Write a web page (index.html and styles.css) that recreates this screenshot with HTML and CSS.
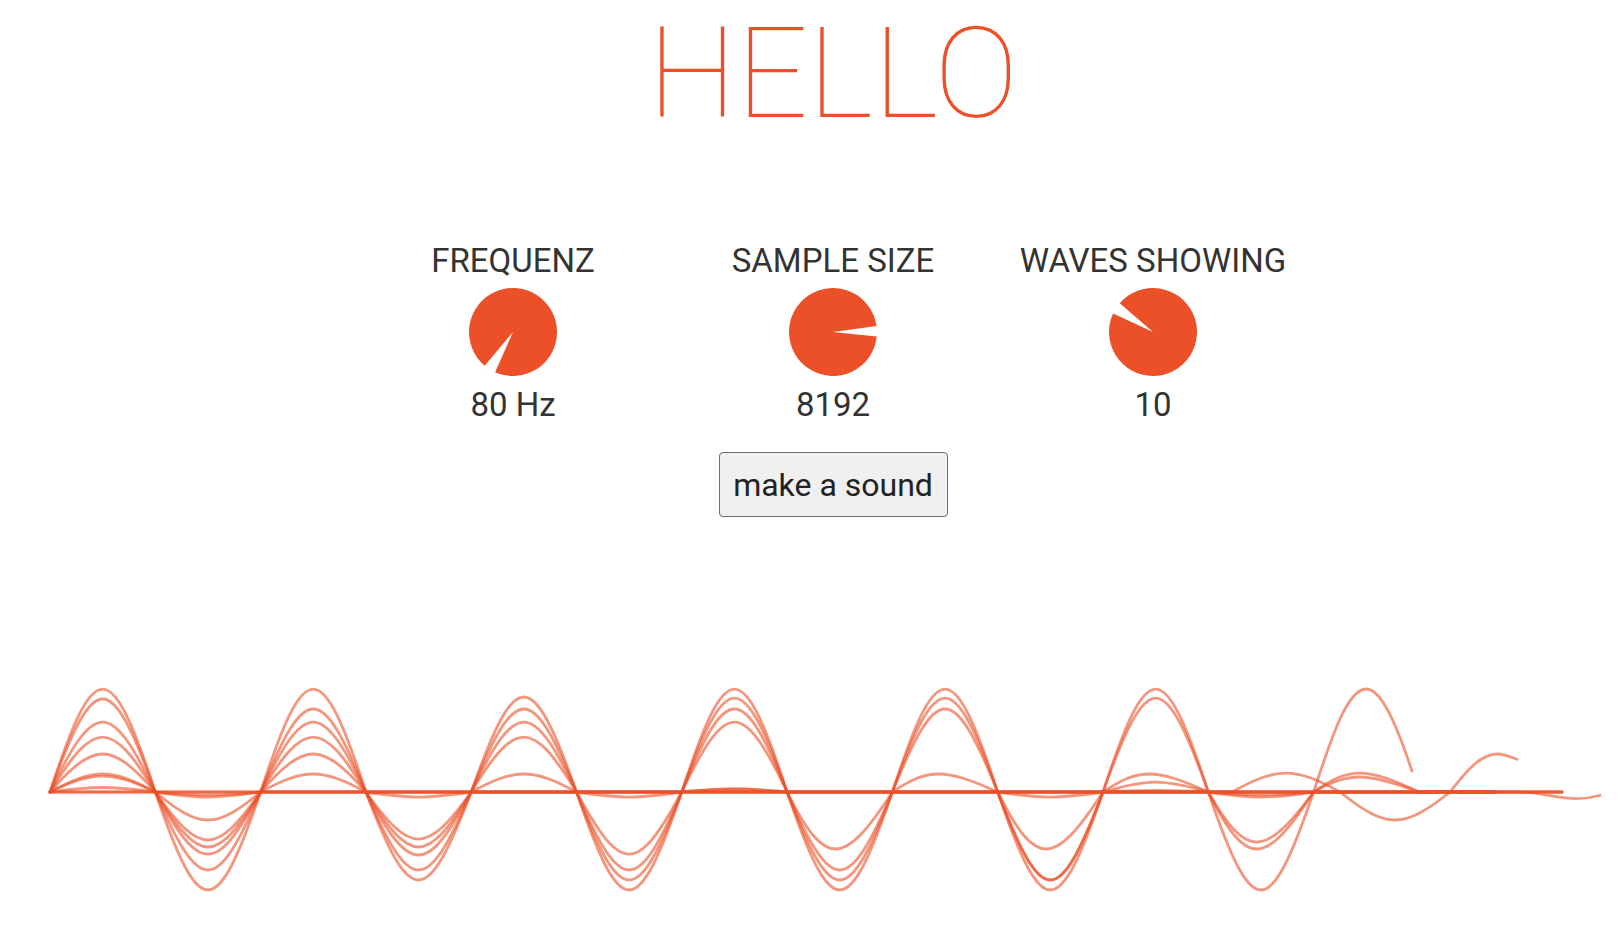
FILE: index.html
```html
<!DOCTYPE html>
<html lang="de">
<head>
<meta charset="utf-8">
<title>HELLO</title>
<link rel="stylesheet" href="styles.css">
</head>
<body>
<div class="top">
  <h1 class="title">HELLO</h1>
  <section class="controls">
    <div class="control">
      <div class="label">FREQUENZ</div>
      <svg class="knob" viewBox="0 0 88 88"><path class="knob-fill" d="M44,44 L15.72,77.70 A44,44 0 1 1 26.1,84.19 Z"/></svg>
      <div class="value">80 Hz</div>
    </div>
    <div class="control">
      <div class="label">SAMPLE SIZE</div>
      <svg class="knob" viewBox="0 0 88 88"><path class="knob-fill" d="M44,44 L87.76,48.60 A44,44 0 1 1 87.57,37.88 Z"/></svg>
      <div class="value">8192</div>
    </div>
    <div class="control">
      <div class="label">WAVES SHOWING</div>
      <svg class="knob" viewBox="0 0 88 88"><path class="knob-fill" d="M44,44 L10.79,15.13 A44,44 0 1 1 4.12,25.41 Z"/></svg>
      <div class="value">10</div>
    </div>
  </section>
  <div class="actions">
    <button class="sound-btn" type="button">make a sound</button>
  </div>
</div>
<svg class="scope" width="1618" height="240" viewBox="0 0 1618 240">
  <g class="traces" transform="translate(0,120)">
    <path d="M50,0 c44.69,-137.3 60.61,-137.3 105.3,0 c44.69,130.7 60.61,130.7 105.3,0 c44.69,-137.3 60.61,-137.3 105.3,0 c44.69,117.3 60.61,117.3 105.3,0 c44.69,-126.7 60.61,-126.7 105.3,0 c44.69,130.7 60.61,130.7 105.3,0 c44.69,-137.3 60.61,-137.3 105.3,0 c44.69,130.7 60.61,130.7 105.3,0 c44.69,-137.3 60.61,-137.3 105.3,0 c44.69,130.7 60.61,130.7 105.3,0 c44.69,-137.3 60.61,-137.3 105.3,0 c44.69,130.7 60.61,130.7 105.3,0 c17.6,-54.1 33.7,-103 52.65,-103 c15.25,0 30.5,36.1 45.75,82"/>
    <path d="M50,0 c44.69,-124 60.61,-124 105.3,0 c44.69,104 60.61,104 105.3,0 c44.69,-110.7 60.61,-110.7 105.3,0 c44.69,104 60.61,104 105.3,0 c44.69,-110.7 60.61,-110.7 105.3,0 c44.69,117.3 60.61,117.3 105.3,0 c44.69,-125.3 60.61,-125.3 105.3,0 c44.69,117.3 60.61,117.3 105.3,0 c44.69,-125.3 60.61,-125.3 105.3,0 c44.69,117.3 60.61,117.3 105.3,0 c44.69,-125.3 60.61,-125.3 105.3,0 c38,66.7 56,66.7 105.3,0 c36,-20 52,-20 105.3,0 H1495"/>
    <path d="M50,0 c44.69,-93.3 60.61,-93.3 105.3,0 c44.69,82.7 60.61,82.7 105.3,0 c44.69,-93.3 60.61,-93.3 105.3,0 c44.69,84 60.61,84 105.3,0 c44.69,-93.3 60.61,-93.3 105.3,0 c44.69,104 60.61,104 105.3,0 c44.69,-110.7 60.61,-110.7 105.3,0 c44.69,104 60.61,104 105.3,0 c44.69,-110.7 60.61,-110.7 105.3,0 c44.69,117.3 60.61,117.3 105.3,0 c44.69,-13.3 60.61,-13.3 105.3,0 c44.69,4 60.61,4 105.3,0 H1562"/>
    <path d="M50,0 c44.69,-73.3 60.61,-73.3 105.3,0 c44.69,73.3 60.61,73.3 105.3,0 c44.69,-73.3 60.61,-73.3 105.3,0 c44.69,73.3 60.61,73.3 105.3,0 c44.69,-73.3 60.61,-73.3 105.3,0 c44.69,82.7 60.61,82.7 105.3,0 c44.69,-93.3 60.61,-93.3 105.3,0 c38,76 56,76 105.3,0 c36,-24 52,-24 105.3,0 c38,76 56,76 105.3,0 c36,-24 52,-24 105.3,0 c38,76 56,76 105.3,0 c36,-25.3 52,-25.3 105.3,0 H1495"/>
    <path d="M50,0 c44.69,-50.7 60.61,-50.7 105.3,0 c44.69,64 60.61,64 105.3,0 c44.69,-50.7 60.61,-50.7 105.3,0 c44.69,62.7 60.61,62.7 105.3,0 c44.69,-24 60.61,-24 105.3,0 c44.69,6.7 60.61,6.7 105.3,0 c44.69,-4 60.61,-4 105.3,0 H1562"/>
    <path d="M50,0 c44.69,-24 60.61,-24 105.3,0 c44.69,37.3 60.61,37.3 105.3,0 c44.69,-24 60.61,-24 105.3,0 c44.69,6.7 60.61,6.7 105.3,0 H1495"/>
    <path d="M50,0 c44.69,-21.3 60.61,-21.3 105.3,0 c44.69,6.7 60.61,6.7 105.3,0 H1520 c19,0 38,6.6 57,6.6 c12,0 18,-2 23,-3.3"/>
    <path d="M50,0 c44.69,-6 60.61,-6 105.3,0 c44.69,4 60.61,4 105.3,0 H997.7 c44.69,6.7 60.61,6.7 105.3,0 c44.69,-2 60.61,-2 105.3,0 c44.69,6.7 60.61,6.7 105.3,0 H1562"/>
    <path d="M50,0 H1232 c45.8,-25.3 62.2,-25.3 108,0 c46.7,37.3 63.3,37.3 110,0 c15.7,-20 30.1,-38 47,-38 c7,0 13,2.5 20,5.3"/>
    <path d="M50,0 H681.8 c44.69,-4 60.61,-4 105.3,0 H1495"/>
  </g>
</svg>
</body>
</html>
```

FILE: styles.css
```css
body {
  margin: 0;
  background: #ffffff;
  font-family: Roboto, "Liberation Sans", sans-serif;
  color: #333333;
}

.top {
  padding-left: 48px;
  text-align: center;
}

.title {
  margin: 0;
  padding-top: 4px;
  font-family: Roboto, "Liberation Sans", sans-serif;
  font-weight: 100;
  font-size: 126px;
  line-height: 140px;
  color: #eb5028;
}

.controls {
  display: flex;
  justify-content: center;
  margin-top: 97px;
}

.control {
  width: 320px;
  display: flex;
  flex-direction: column;
  align-items: center;
}

.label,
.value {
  font-size: 33px;
  line-height: 40px;
}

.knob {
  display: block;
  width: 88px;
  height: 88px;
  margin-top: 7px;
}

.knob-fill {
  fill: #eb5028;
}

.value {
  margin-top: 9px;
}

.actions {
  display: flex;
  justify-content: center;
  margin-top: 27px;
}

.sound-btn {
  width: 229px;
  height: 65px;
  padding: 0;
  font-family: inherit;
  font-size: 32px;
  color: #222222;
  background: #f0f0f0;
  border: 1px solid #6e6e6e;
  border-radius: 4px;
}

.scope {
  display: block;
  margin-top: 155px;
}

.traces path {
  fill: none;
  stroke: #eb5028;
  stroke-opacity: 0.6;
  stroke-width: 2.8;
  stroke-linecap: round;
  stroke-linejoin: round;
}
```
